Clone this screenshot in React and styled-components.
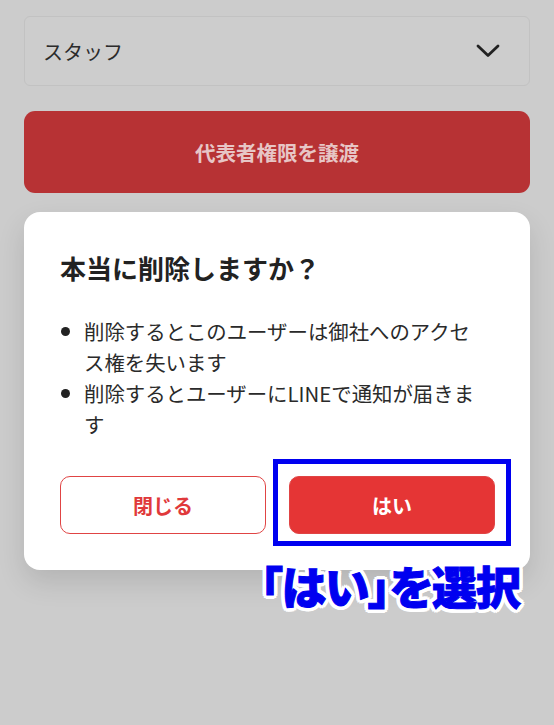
import React from "react";
import styled, { createGlobalStyle } from "styled-components";

const Global = createGlobalStyle`
  html, body { margin: 0; padding: 0; background: #cccccc; }
  body { font-family: "Noto Sans CJK JP", "Noto Sans", sans-serif; }
  * { box-sizing: border-box; }
`;

const Page = styled.div`
  position: relative;
  width: 554px;
  height: 725px;
  background: #cccccc;
  padding: 16px 24px 0 24px;
  display: flex;
  flex-direction: column;
  overflow: hidden;
`;

const Select = styled.div`
  height: 70px;
  border: 1px solid #c2c2c2;
  border-radius: 6px;
  background: #cdcdcd;
  display: flex;
  align-items: center;
  justify-content: space-between;
  padding: 0 29px 0 18px;
  font-size: 20px;
  color: #2b2b2b;
`;

const TransferButton = styled.div`
  margin-top: 25px;
  height: 82px;
  border-radius: 11px;
  background: #b73234;
  display: flex;
  align-items: center;
  justify-content: center;
  font-size: 20.5px;
  font-weight: 700;
  color: #e7c6c6;
`;

const Modal = styled.div`
  margin-top: 19px;
  background: #ffffff;
  border-radius: 16px;
  padding: 37px 35px 36px 36px;
  box-shadow: 0 12px 28px rgba(0, 0, 0, 0.12);
  display: flex;
  flex-direction: column;
`;

const Title = styled.h2`
  margin: 0;
  font-size: 26px;
  line-height: 38px;
  font-weight: 700;
  color: #222;
`;

const List = styled.ul`
  margin: 29px 0 0 0;
  padding: 0 14px 0 24px;
  list-style: none;
  font-size: 20.4px;
  line-height: 31px;
  color: #2a2a2a;
`;

const Item = styled.li`
  position: relative;
  &::before {
    content: "";
    position: absolute;
    left: -23px;
    top: 11px;
    width: 9px;
    height: 9px;
    border-radius: 50%;
    background: #222;
  }
`;

const Actions = styled.div`
  margin-top: 36px;
  display: grid;
  grid-template-columns: 1fr 1fr;
  gap: 23px;
`;

const ActionButton = styled.div`
  height: 58px;
  border-radius: 10px;
  display: flex;
  align-items: center;
  justify-content: center;
  font-size: 20px;
  font-weight: 700;
  border: 1.5px solid #e04444;
  background: ${(p) => (p.$primary ? "#e53535" : "#ffffff")};
  color: ${(p) => (p.$primary ? "#ffffff" : "#e0393b")};
`;

const Highlight = styled.div`
  position: absolute;
  left: 273px;
  top: 459px;
  width: 238px;
  height: 87px;
  border: 5px solid #0000f0;
  outline: 3px solid #ffffff;
`;

const Callout = styled.div`
  position: absolute;
  left: 260px;
  top: 555px;
  font-size: 45px;
  line-height: 62px;
  font-weight: 900;
  color: #0000f0;
  font-feature-settings: "palt";
  letter-spacing: -1px;
  white-space: nowrap;
  -webkit-text-stroke: 1px #0000f0;
  text-shadow:
    3px 0 0 #fff, -3px 0 0 #fff, 0 3px 0 #fff, 0 -3px 0 #fff,
    2px 2px 0 #fff, -2px -2px 0 #fff, 2px -2px 0 #fff, -2px 2px 0 #fff,
    4px 1px 0 #fff, -4px 1px 0 #fff, 1px 4px 0 #fff, 1px -4px 0 #fff,
    4px -1px 0 #fff, -4px -1px 0 #fff, -1px 4px 0 #fff, -1px -4px 0 #fff,
    3px 3px 0 #fff, -3px -3px 0 #fff, 3px -3px 0 #fff, -3px 3px 0 #fff;
`;

const Chevron = () => (
  <svg width="24" height="14" viewBox="0 0 24 14" fill="none">
    <path d="M2 2 L12 11.5 L22 2" stroke="#222" strokeWidth="2.8" strokeLinecap="round" strokeLinejoin="round" />
  </svg>
);

export default function App() {
  return (
    <>
      <Global />
      <Page>
        <Select>
          <span>スタッフ</span>
          <Chevron />
        </Select>
        <TransferButton>代表者権限を譲渡</TransferButton>
        <Modal>
          <Title>本当に削除しますか？</Title>
          <List>
            <Item>削除するとこのユーザーは御社へのアクセス権を失います</Item>
            <Item>削除するとユーザーにLINEで通知が届きます</Item>
          </List>
          <Actions>
            <ActionButton>閉じる</ActionButton>
            <ActionButton $primary>はい</ActionButton>
          </Actions>
        </Modal>
        <Highlight />
        <Callout>「はい」を選択</Callout>
      </Page>
    </>
  );
}
